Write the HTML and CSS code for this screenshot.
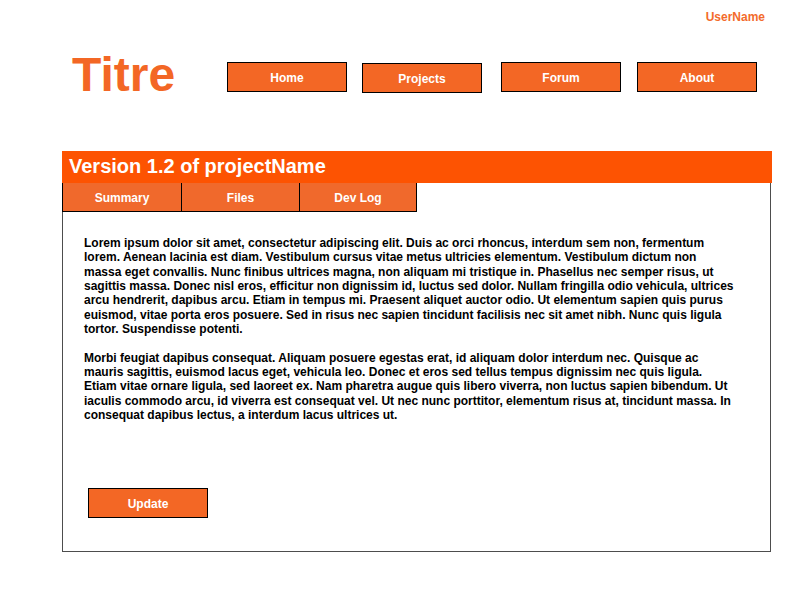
FILE: index.html
```html
<!DOCTYPE html>
<html lang="fr">
<head>
<meta charset="utf-8">
<title>Titre</title>
<link rel="stylesheet" href="styles.css">
</head>
<body>
<div class="topbar"><span class="username">UserName</span></div>
<header class="header">
  <h1 class="site-title">Titre</h1>
  <nav class="nav">
    <a class="nav-btn" href="#">Home</a>
    <a class="nav-btn nav-btn--projects" href="#">Projects</a>
    <a class="nav-btn nav-btn--forum" href="#">Forum</a>
    <a class="nav-btn nav-btn--about" href="#">About</a>
  </nav>
</header>
<main class="panel">
  <h2 class="panel-head">Version 1.2 of projectName</h2>
  <div class="panel-body">
    <div class="tabs">
      <a class="tab tab--first" href="#">Summary</a>
      <a class="tab tab--second" href="#">Files</a>
      <a class="tab tab--third" href="#">Dev Log</a>
    </div>
    <div class="content">
      <p class="para">Lorem ipsum dolor sit amet, consectetur adipiscing elit. Duis ac orci rhoncus, interdum sem non, fermentum lorem. Aenean lacinia est diam. Vestibulum cursus vitae metus ultricies elementum. Vestibulum dictum non massa eget convallis. Nunc finibus ultrices magna, non aliquam mi tristique in. Phasellus nec semper risus, ut sagittis massa. Donec nisl eros, efficitur non dignissim id, luctus sed dolor. Nullam fringilla odio vehicula, ultrices arcu hendrerit, dapibus arcu. Etiam in tempus mi. Praesent aliquet auctor odio. Ut elementum sapien quis purus euismod, vitae porta eros posuere. Sed in risus nec sapien tincidunt facilisis nec sit amet nibh. Nunc quis ligula tortor. Suspendisse potenti.</p>
      <p class="para">Morbi feugiat dapibus consequat. Aliquam posuere egestas erat, id aliquam dolor interdum nec. Quisque ac mauris sagittis, euismod lacus eget, vehicula leo. Donec et eros sed tellus tempus dignissim nec quis ligula. Etiam vitae ornare ligula, sed laoreet ex. Nam pharetra augue quis libero viverra, non luctus sapien bibendum. Ut iaculis commodo arcu, id viverra est consequat vel. Ut nec nunc porttitor, elementum risus at, tincidunt massa. In consequat dapibus lectus, a interdum lacus ultrices ut.</p>
      <button class="update-btn" type="button">Update</button>
    </div>
  </div>
</main>
</body>
</html>
```

FILE: styles.css
```css
* { box-sizing: border-box; }

body {
  margin: 0;
  background: #ffffff;
  font-family: "Liberation Sans", Arial, sans-serif;
  font-weight: bold;
  color: #000;
}

.topbar {
  display: flex;
  justify-content: flex-end;
  padding: 10px 35px 0 0;
  height: 23px;
}

.username {
  color: #f36b2c;
  font-size: 12px;
  line-height: 14px;
}

.header {
  display: flex;
  align-items: flex-start;
  margin-top: 24px;
  padding-left: 72px;
}

.site-title {
  margin: 0;
  width: 155px;
  color: #f36725;
  font-size: 48px;
  line-height: 55px;
  font-weight: bold;
}

.nav {
  display: flex;
  margin-top: 15px;
}

.nav-btn {
  display: block;
  width: 120px;
  height: 30px;
  padding-top: 2px;
  border: 1px solid #000;
  background: #f36725;
  color: #fff;
  text-decoration: none;
  font-size: 12px;
  line-height: 26px;
  text-align: center;
}

.nav-btn--projects { margin-left: 15px; margin-top: 1px; }
.nav-btn--forum { margin-left: 19px; }
.nav-btn--about { margin-left: 16px; }

.panel {
  margin: 49px 0 0 62px;
  width: 710px;
}

.panel-head {
  margin: 0;
  height: 32px;
  padding: 0 0 2px 7px;
  background: #fd5302;
  color: #fff;
  font-size: 20px;
  line-height: 30px;
  font-weight: bold;
}

.panel-body {
  width: 709px;
  border: 1px solid #4d4d4d;
  border-top: none;
}

.tabs {
  display: flex;
  margin-left: -1px;
}

.tab {
  display: block;
  height: 29px;
  padding-top: 2px;
  border-right: 1px solid #000;
  border-bottom: 1px solid #000;
  background: #f0692c;
  color: #fff;
  text-decoration: none;
  font-size: 12px;
  line-height: 26px;
  text-align: center;
}

.tab--first { width: 120px; border-left: 1px solid #000; }
.tab--second { width: 118px; }
.tab--third { width: 117px; }

.content {
  padding: 24px 35px 33px 21px;
}

.para {
  margin: 0 0 14.33px 0;
  font-size: 12px;
  line-height: 14.33px;
}

.update-btn {
  display: block;
  margin: 66px 0 0 4px;
  width: 120px;
  height: 30px;
  padding: 1px 0 0 0;
  border: 1px solid #000;
  background: #f36725;
  color: #fff;
  font-family: "Liberation Sans", Arial, sans-serif;
  font-weight: bold;
  font-size: 12px;
}
```
